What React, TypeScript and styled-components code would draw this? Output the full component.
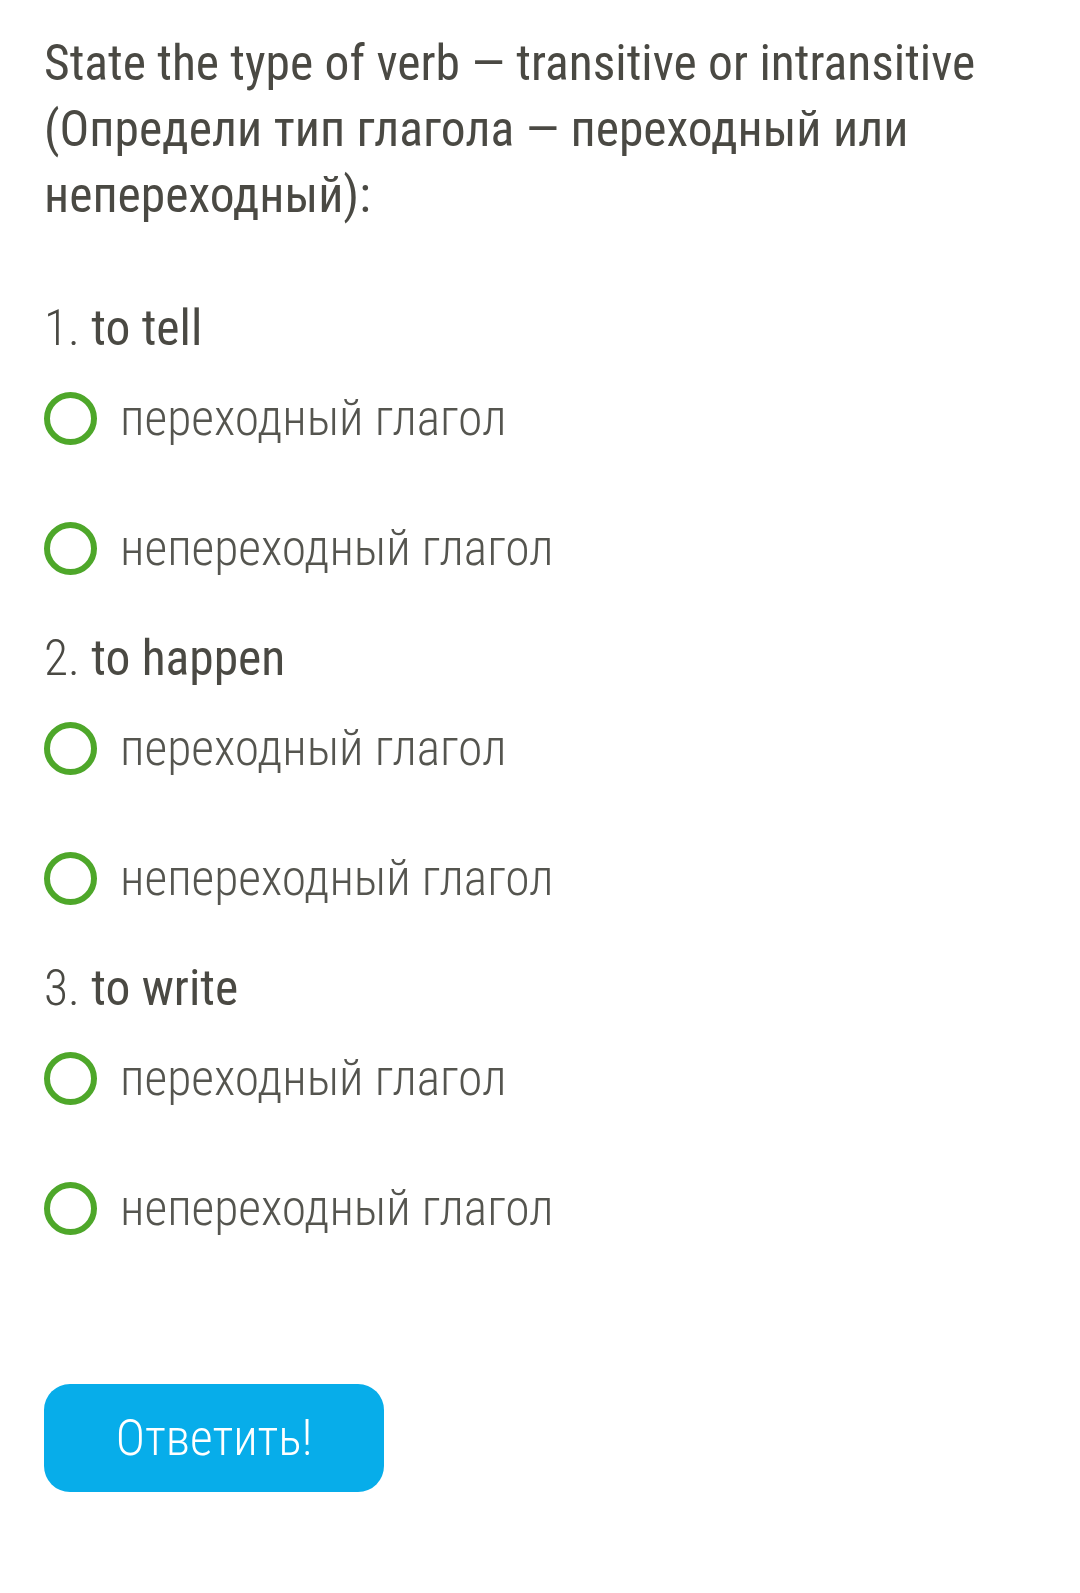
import styled, { createGlobalStyle } from "styled-components";

const GlobalStyle = createGlobalStyle`
  html, body {
    margin: 0;
    padding: 0;
    background: #ffffff;
  }
  body {
    font-family: "Roboto Condensed", Roboto, "Liberation Sans", sans-serif;
    -webkit-font-smoothing: antialiased;
  }
`;

const Page = styled.div`
  width: 1080px;
  min-height: 1593px;
  box-sizing: border-box;
  padding: 30px 44px 0 44px;
  color: #4a4943;
`;

const Title = styled.h1`
  margin: 0;
  font-size: 49.5px;
  line-height: 66px;
  font-weight: 400;
  color: #4a4943;
`;

const Question = styled.section`
  display: flex;
  flex-direction: column;
`;

const QuestionList = styled.div`
  margin-top: 67px;
  display: flex;
  flex-direction: column;
  gap: 45px;
`;

const QuestionTitle = styled.h2`
  margin: 0;
  font-size: 49.5px;
  line-height: 66px;
  font-weight: 400;
  color: #4a4943;
`;

const Number = styled.span`
  font-weight: 300;
`;

const Options = styled.div`
  display: flex;
  flex-direction: column;
  gap: 66px;
  margin-top: 25px;
`;

const Option = styled.label`
  display: flex;
  align-items: center;
  gap: 23px;
  height: 64px;
  cursor: pointer;
`;

const Radio = styled.span`
  width: 53px;
  height: 53px;
  box-sizing: border-box;
  border: 6px solid #4ea72a;
  border-radius: 50%;
  flex-shrink: 0;
`;

const OptionText = styled.span`
  font-size: 49.5px;
  font-weight: 300;
  color: #55554f;
`;

const Button = styled.button`
  margin-top: 144px;
  width: 340px;
  height: 108px;
  border: none;
  border-radius: 26px;
  background: #07adea;
  color: #ffffff;
  font-family: inherit;
  font-size: 49.5px;
  font-weight: 300;
  cursor: pointer;
`;

const questions = [
  { n: "1.", verb: "to tell" },
  { n: "2.", verb: "to happen" },
  { n: "3.", verb: "to write" },
];

const answers = ["переходный глагол", "непереходный глагол"];

export default function App() {
  return (
    <Page>
      <GlobalStyle />
      <Title>
        State the type of verb — transitive or intransitive (Определи тип
        глагола — переходный или непереходный):
      </Title>
      <QuestionList>
        {questions.map((q) => (
          <Question key={q.n}>
            <QuestionTitle>
              <Number>{q.n}</Number> {q.verb}
            </QuestionTitle>
            <Options>
              {answers.map((a) => (
                <Option key={a}>
                  <Radio />
                  <OptionText>{a}</OptionText>
                </Option>
              ))}
            </Options>
          </Question>
        ))}
      </QuestionList>
      <Button>Ответить!</Button>
    </Page>
  );
}
